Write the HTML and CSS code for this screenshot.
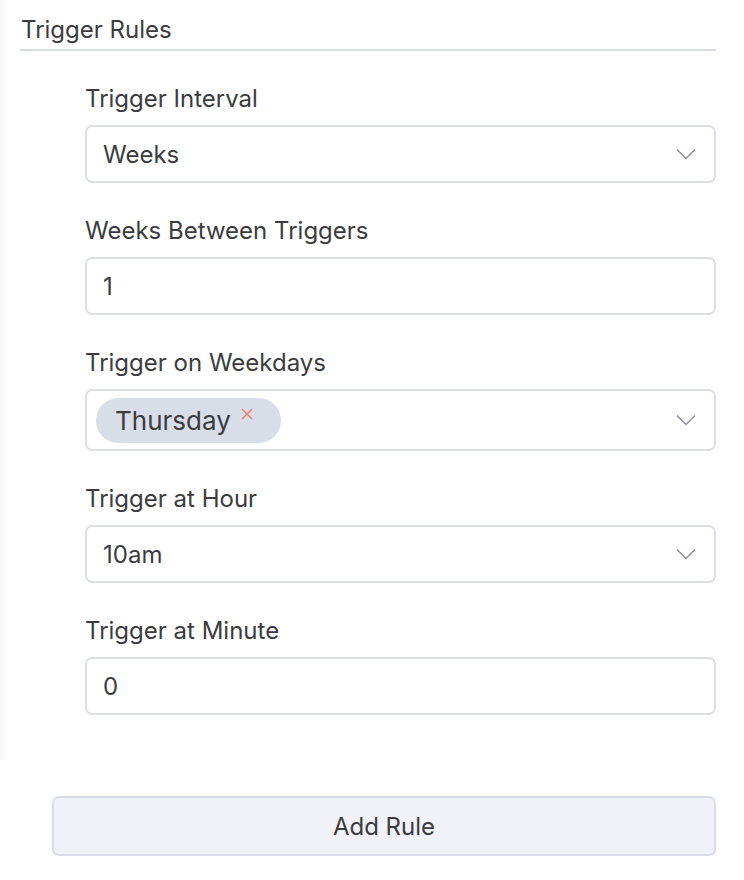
FILE: index.html
```html
<!DOCTYPE html>
<html>
<head>
<meta charset="utf-8">
<link rel="stylesheet" href="styles.css">
</head>
<body>
<div class="panel">
  <h2 class="section-title">Trigger Rules</h2>
  <div class="fields">
    <div class="field">
      <div class="label">Trigger Interval</div>
      <div class="control select">
        <span class="value">Weeks</span>
        <svg class="chevron" width="20" height="12" viewBox="0 0 20 12"><path d="M1 1.5 L10 10.5 L19 1.5" fill="none" stroke="#8a8d96" stroke-width="1.4"/></svg>
      </div>
    </div>
    <div class="field">
      <div class="label">Weeks Between Triggers</div>
      <div class="control input"><span class="value">1</span></div>
    </div>
    <div class="field">
      <div class="label">Trigger on Weekdays</div>
      <div class="control select multi">
        <span class="chip">Thursday<svg class="chip-x" width="12" height="12" viewBox="0 0 12 12"><path d="M1 1 L11 11 M11 1 L1 11" stroke="#f0786c" stroke-width="1.4" fill="none"/></svg></span>
        <svg class="chevron" width="20" height="12" viewBox="0 0 20 12"><path d="M1 1.5 L10 10.5 L19 1.5" fill="none" stroke="#8a8d96" stroke-width="1.4"/></svg>
      </div>
    </div>
    <div class="field">
      <div class="label">Trigger at Hour</div>
      <div class="control select">
        <span class="value">10am</span>
        <svg class="chevron" width="20" height="12" viewBox="0 0 20 12"><path d="M1 1.5 L10 10.5 L19 1.5" fill="none" stroke="#8a8d96" stroke-width="1.4"/></svg>
      </div>
    </div>
    <div class="field">
      <div class="label">Trigger at Minute</div>
      <div class="control input"><span class="value">0</span></div>
    </div>
  </div>
  <div class="actions">
    <button class="add-btn">Add Rule</button>
  </div>
</div>
</body>
</html>
```
FILE: styles.css
```css
html, body {
  margin: 0;
  padding: 0;
  background: #fff;
}
body {
  font-family: Inter, "Noto Sans", sans-serif;
  color: #3b3c40;
  width: 744px;
  height: 880px;
  background: linear-gradient(to right, #f6f6f6 0px, #fbfbfb 5px, #ffffff 10px) no-repeat;
  background-size: 100% 760px;
}
.panel {
  padding: 15px 28px 0 20px;
}
.section-title {
  margin: 0;
  font-size: 24px;
  font-weight: 400;
  line-height: 30px;
  padding-left: 1px;
  padding-bottom: 4px;
  border-bottom: 2px solid #d9dce8;
}
.fields {
  display: flex;
  flex-direction: column;
  gap: 32px;
  padding-left: 65px;
  padding-top: 32px;
}
.field {
  display: flex;
  flex-direction: column;
  gap: 10px;
}
.label {
  font-size: 24px;
  line-height: 32px;
  color: #3b3c40;
}
.control {
  box-sizing: border-box;
  height: 58px;
  border: 2px solid #dcdfea;
  border-radius: 7px;
  display: flex;
  align-items: center;
  padding: 0 18px 0 16px;
  font-size: 24px;
  background: #fff;
}
.select {
  justify-content: space-between;
}
.multi {
  height: 62px;
  padding-left: 9px;
}
.chip {
  display: inline-flex;
  align-items: center;
  height: 45px;
  padding: 0 28px 0 19px;
  border-radius: 23px;
  background: #d9dde8;
  font-size: 26px;
  color: #3b3c40;
}
.chip-x {
  display: block;
  margin-left: 10px;
  position: relative;
  top: -6px;
}
.chevron {
  display: block;
}
.actions {
  padding: 81px 0 0 32px;
}
.add-btn {
  width: 100%;
  height: 60px;
  box-sizing: border-box;
  border: 2px solid #d9dce8;
  border-radius: 7px;
  background: #f0f2f8;
  font-family: Inter, "Noto Sans", sans-serif;
  font-size: 24px;
  color: #3b3c40;
}
```
